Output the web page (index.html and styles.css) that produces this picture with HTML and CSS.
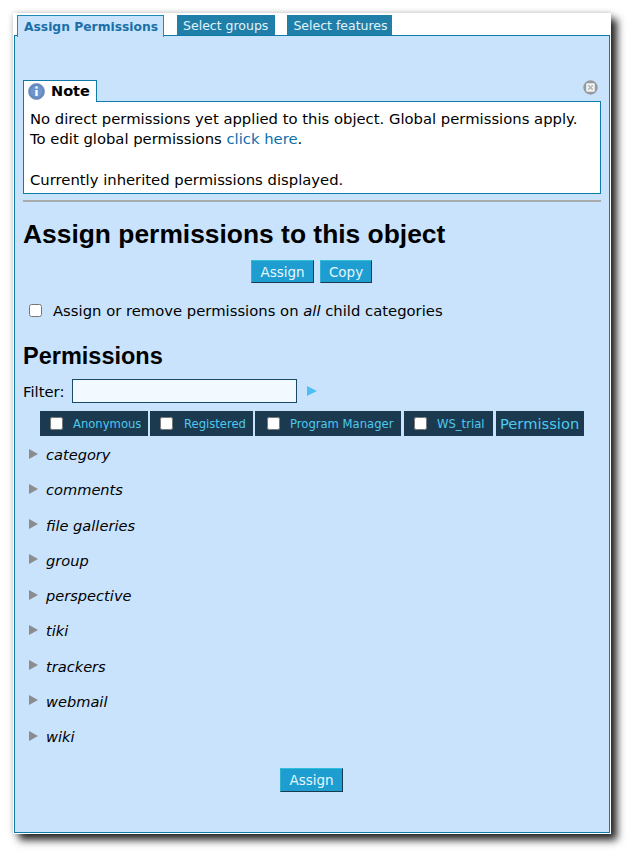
FILE: index.html
```html
<!DOCTYPE html>
<html lang="en">
<head>
    <meta charset="UTF-8">
    <meta name="viewport" content="width=device-width, initial-scale=1.0">
    <title>Assign Permissions</title>
    <link rel="stylesheet" href="styles.css">
</head>
<body>
    <div class="window">
        <div class="tabs">
            <a class="tab tab-active">Assign Permissions</a>
            <a class="tab tab-groups">Select groups</a>
            <a class="tab tab-features">Select features</a>
        </div>
        <div class="panel">
            <div class="note-top">
                <div class="note-title">
                    <svg class="note-icon" width="17" height="17" viewBox="0 0 17 17">
                        <circle cx="8.5" cy="8.5" r="8" fill="#5f86bd" stroke="#8ba0bf"/>
                        <circle cx="8.5" cy="8.5" r="6" fill="#6e97cf"/>
                        <rect x="7.3" y="3.4" width="2.4" height="2.2" fill="#fff"/>
                        <rect x="7.3" y="7" width="2.4" height="6" fill="#fff"/>
                    </svg>
                    <span class="note-label">Note</span>
                </div>
                <svg class="note-close" width="15" height="15" viewBox="0 0 15 15">
                    <circle cx="7.5" cy="7.5" r="7.2" fill="#96999d"/>
                    <rect x="3.2" y="3.2" width="8.6" height="8.6" rx="1" fill="#f2f4f6"/>
                    <path d="M5.2 5.2l4.6 4.6M9.8 5.2l-4.6 4.6" stroke="#b4b7ba" stroke-width="1.6"/>
                </svg>
            </div>
            <div class="note-body">
                No direct permissions yet applied to this object. Global permissions apply.<br>
                To edit global permissions <a class="link">click here</a>.<br>
                <br>
                Currently inherited permissions displayed.
            </div>
            <div class="rule"></div>
            <h1>Assign permissions to this object</h1>
            <div class="buttons">
                <button class="btn btn-assign">Assign</button>
                <button class="btn btn-copy">Copy</button>
            </div>
            <label class="child-option">
                <input type="checkbox">
                <span>Assign or remove permissions on <em>all</em> child categories</span>
            </label>
            <h2>Permissions</h2>
            <div class="filter">
                <span>Filter:</span>
                <input type="text" class="filter-input">
                <span class="filter-go"></span>
            </div>
            <div class="columns">
                <div class="col col-anon"><input type="checkbox"><span>Anonymous</span></div>
                <div class="col col-reg"><input type="checkbox"><span>Registered</span></div>
                <div class="col col-pm"><input type="checkbox"><span>Program Manager</span></div>
                <div class="col col-ws"><input type="checkbox"><span>WS_trial</span></div>
                <div class="col col-perm">Permission</div>
            </div>
            <ul class="tree">
                <li><i class="arrow"></i><em>category</em></li>
                <li><i class="arrow"></i><em>comments</em></li>
                <li><i class="arrow"></i><em>file galleries</em></li>
                <li><i class="arrow"></i><em>group</em></li>
                <li><i class="arrow"></i><em>perspective</em></li>
                <li><i class="arrow"></i><em>tiki</em></li>
                <li><i class="arrow"></i><em>trackers</em></li>
                <li><i class="arrow"></i><em>webmail</em></li>
                <li><i class="arrow"></i><em>wiki</em></li>
            </ul>
            <div class="bottom-button">
                <button class="btn btn-assign">Assign</button>
            </div>
        </div>
    </div>
</body>
</html>
```

FILE: styles.css
```css
html, body {
    margin: 0;
    padding: 0;
    background-color: #ffffff;
}

body {
    font-family: "DejaVu Sans", sans-serif;
    font-size: 14.8px;
    color: #000000;
    height: 857px;
    overflow: hidden;
}

.window {
    width: 598px;
    height: 821px;
    margin: 13px 0 0 13px;
    background-color: #ffffff;
    box-shadow: 6px 6px 8px rgba(0, 0, 0, 0.85), 0 0 6px rgba(0, 0, 0, 0.2);
    padding-top: 2px;
    box-sizing: border-box;
}

/* tabs */
.tabs {
    display: flex;
    align-items: flex-start;
    height: 21px;
    padding-left: 4px;
    position: relative;
    z-index: 1;
}

.tab {
    display: block;
    height: 20px;
    line-height: 21px;
    padding: 0 6px;
    margin-right: 12px;
    font-size: 12.5px;
    color: #e3f3fb;
    background-color: #1f7fa8;
}

.tab-active {
    height: 21px;
    line-height: 22px;
    margin-right: 13px;
    padding-right: 5px;
    font-size: 12.3px;
    font-weight: bold;
    color: #1a6fa8;
    background-color: #c9e3fd;
    border: 1px solid #1f8ab4;
    border-bottom: none;
}

.tab-groups { padding-right: 7px; }
.tab-features { padding-right: 4px; }

.panel {
    width: 596px;
    height: 798px;
    margin-left: 1px;
    margin-top: -1px;
    border: 1px solid #0f7ba8;
    box-sizing: border-box;
    background-color: #c9e3fd;
    padding: 44px 8px 0 8px;
}

/* note box */
.note-top {
    display: flex;
    justify-content: space-between;
    height: 21px;
}

.note-title {
    display: flex;
    align-items: center;
    gap: 6px;
    width: 74px;
    height: 22px;
    box-sizing: border-box;
    border: 1px solid #0f7ba8;
    border-bottom: none;
    background-color: #ffffff;
    font-size: 14.5px;
    font-weight: bold;
    padding-left: 4px;
    position: relative;
    z-index: 1;
}

.note-label {
    margin-top: -2px;
}

.note-close {
    margin-right: 3px;
}

.note-body {
    height: 93px;
    box-sizing: border-box;
    border: 1px solid #0f7ba8;
    background-color: #ffffff;
    padding: 7px 6px 0 6px;
    line-height: 20.4px;
}

.link {
    color: #0b6fae;
}

.rule {
    height: 2px;
    margin-top: 6px;
    background-color: #a9abad;
}

h1 {
    font-family: "Liberation Sans", sans-serif;
    font-size: 26.4px;
    line-height: 32px;
    margin: 16px 0 10px 0;
}

h2 {
    font-family: "Liberation Sans", sans-serif;
    font-size: 23.5px;
    line-height: 28px;
    margin: 23px 0 9px 0;
}

.buttons {
    display: flex;
    justify-content: center;
    gap: 6px;
    padding-right: 1px;
}

.btn {
    font-family: "DejaVu Sans", sans-serif;
    font-size: 13.5px;
    height: 23px;
    padding: 0;
    color: #e6f7ff;
    background-color: #1d9dd0;
    border: 1px solid #1b3a50;
    border-top-color: #2fc0dc;
    border-left-color: #2fb0d4;
    border-radius: 0;
}

.btn-assign {
    width: 63px;
}

.btn-copy {
    width: 52px;
}

.child-option {
    display: flex;
    align-items: center;
    gap: 11px;
    margin-top: 19px;
    padding-left: 6px;
}

.child-option input {
    margin: 0;
    width: 13px;
    height: 13px;
}

.filter {
    display: flex;
    align-items: center;
    height: 24px;
}

.filter-input {
    width: 225px;
    height: 24px;
    box-sizing: border-box;
    margin: 0 10px 0 8px;
    border: 1px solid #1b4a68;
    background-color: #f3faff;
    padding: 0;
}

.filter-go {
    width: 0;
    height: 0;
    border-left: 10px solid #4cc0f5;
    border-top: 5px solid transparent;
    border-bottom: 5px solid transparent;
}

/* group columns */
.columns {
    display: flex;
    gap: 2px;
    margin: 8px 0 0 17px;
}

.col {
    display: flex;
    align-items: center;
    height: 25px;
    box-sizing: border-box;
    background-color: #1b3a50;
    color: #4fc8ee;
    font-size: 11.6px;
    padding-left: 10px;
}

.col input {
    margin: 0 10px 0 0;
    width: 13px;
    height: 13px;
}

.col-anon { width: 108px; }
.col-reg { width: 103px; }
.col-reg input { margin-right: 11px; }
.col-pm { width: 146px; margin-right: 1px; padding-left: 12px; }
.col-ws { width: 89px; margin-right: 1px; }

.col-perm {
    width: 88px;
    padding-left: 4px;
    font-size: 14.7px;
}

/* permission tree */
.tree {
    list-style: none;
    margin: 1px 0 0 0;
    padding: 0;
}

.tree li {
    display: flex;
    align-items: center;
    height: 35.25px;
    padding-left: 6px;
    font-size: 14.6px;
}

.tree em {
    margin-left: 8px;
}

.arrow {
    width: 0;
    height: 0;
    margin-top: -2px;
    border-left: 9px solid #8a8c8e;
    border-top: 5px solid transparent;
    border-bottom: 5px solid transparent;
}

.bottom-button {
    display: flex;
    justify-content: center;
    margin-top: 14px;
    padding-right: 1px;
}

.bottom-button .btn {
    height: 24px;
}
```
